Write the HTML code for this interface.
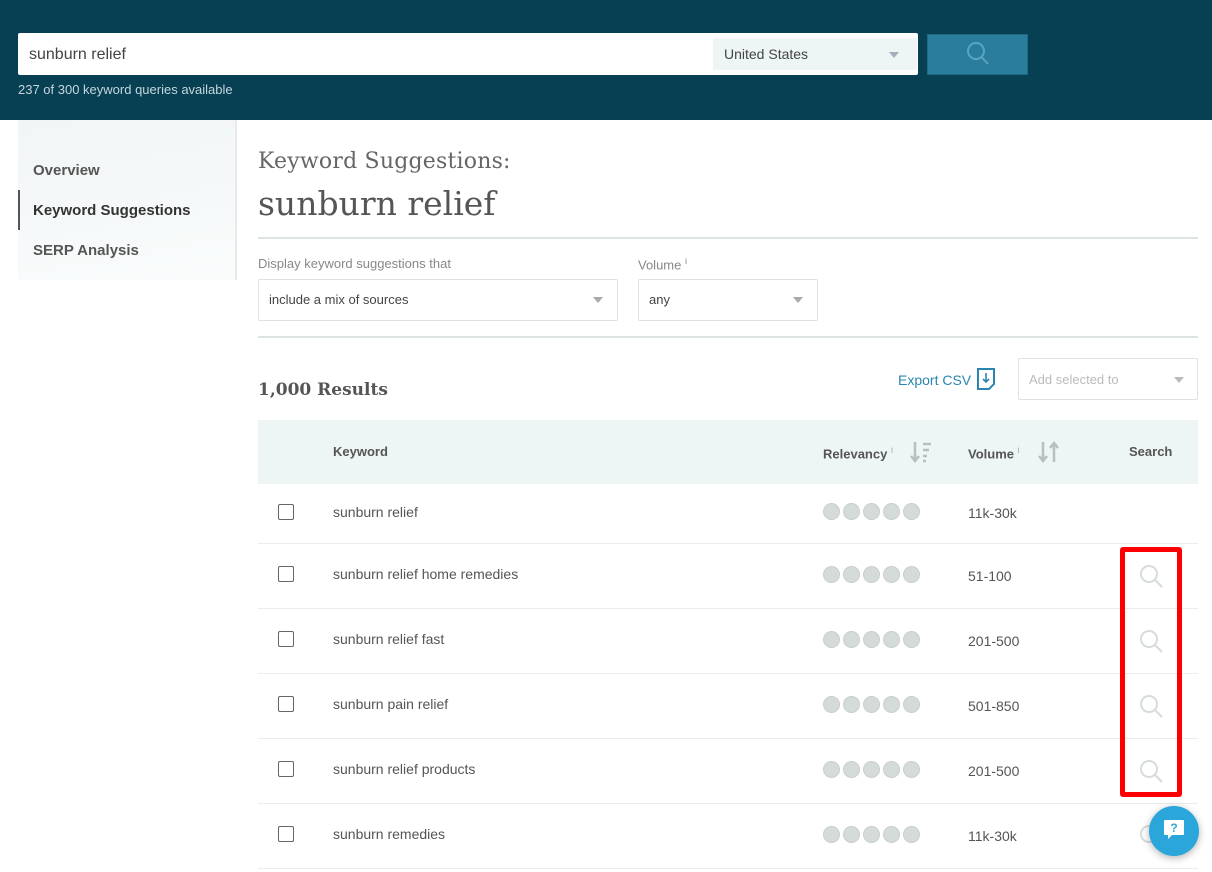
<!DOCTYPE html>
<html><head><meta charset="utf-8"><style>
*{box-sizing:border-box;margin:0;padding:0}
body{width:1212px;height:872px;overflow:hidden;background:#fff;font-family:"Liberation Sans",sans-serif;color:#555;position:relative}
.hdr{position:absolute;left:0;top:0;width:1212px;height:120px;background:#073f53}
.abs{position:absolute}
.dots span{display:inline-block;width:17px;height:17px;border-radius:50%;background:#d5dbd9;border:1px solid #c8cfcd;margin-right:3px;vertical-align:top}
.row{position:absolute;left:258px;width:940px;height:65px;border-bottom:1px solid #e8eeee}
.cb{position:absolute;left:20px;width:16px;height:16px;border:1.5px solid #666;border-radius:2px;background:#fff}
.kw{position:absolute;left:75px;font-size:14px;color:#555}
.vol{position:absolute;left:710px;font-size:14px;color:#555}
.dd{position:absolute;border:1px solid #dce2e2;border-radius:2px;background:#fff;font-size:14px;color:#444}
.tri{position:absolute;width:0;height:0;border-left:5px solid transparent;border-right:5px solid transparent;border-top:6px solid #aaa}
</style></head><body>
<div class="hdr"></div>
<div class="abs" style="left:18px;top:33px;width:900px;height:42px;background:#fff;border-radius:2px"></div>
<div class="abs" style="left:29px;top:46px;font-size:16px;color:#444">sunburn relief</div>
<div class="abs" style="left:713px;top:38px;width:204px;height:32px;background:#eef5f5"></div>
<div class="abs" style="left:724px;top:46px;font-size:14px;color:#444">United States</div>
<div class="tri" style="left:889px;top:52px;border-top-color:#aab"></div>
<div class="abs" style="left:927px;top:34px;width:101px;height:41px;background:#2a7d9c;border:1px solid #216a86"></div>
<svg class="abs" style="left:964px;top:40px" width="28" height="28" viewBox="0 0 28 28"><circle cx="12" cy="11" r="8" fill="none" stroke="#5aa5c2" stroke-width="2"/><line x1="17.5" y1="17" x2="24" y2="24" stroke="#5aa5c2" stroke-width="2"/></svg>
<div class="abs" style="left:18px;top:82px;font-size:13px;color:#c5d6dc">237 of 300 keyword queries available</div>

<div class="abs" style="left:18px;top:120px;width:219px;height:160px;background:linear-gradient(170deg,#f0f5f6,#fafcfc);border-right:2px solid #e6eaea"></div>
<div class="abs" style="left:33px;top:162px;font-size:15px;font-weight:bold;color:#555">Overview</div>
<div class="abs" style="left:18px;top:190px;width:2px;height:40px;background:#555"></div>
<div class="abs" style="left:33px;top:202px;font-size:15px;font-weight:bold;color:#333">Keyword Suggestions</div>
<div class="abs" style="left:33px;top:242px;font-size:15px;font-weight:bold;color:#555">SERP Analysis</div>

<div class="abs" style="left:258px;top:149px;font-family:'DejaVu Serif',serif;font-size:22px;color:#666;letter-spacing:0.2px">Keyword Suggestions:</div>
<div class="abs" style="left:258px;top:184px;font-family:'DejaVu Serif',serif;font-size:33px;color:#555">sunburn relief</div>
<div class="abs" style="left:258px;top:237px;width:940px;height:2px;background:#dde3e3"></div>
<div class="abs" style="left:258px;top:256px;font-size:13px;color:#888">Display keyword suggestions that</div>
<div class="abs" style="left:638px;top:256px;font-size:13px;color:#888">Volume <sup style="font-size:9px">i</sup></div>
<div class="dd" style="left:258px;top:279px;width:360px;height:42px"><span style="position:absolute;left:10px;top:12px;font-size:13px">include a mix of sources</span></div>
<div class="tri" style="left:593px;top:297px"></div>
<div class="dd" style="left:638px;top:279px;width:180px;height:42px"><span style="position:absolute;left:10px;top:12px;font-size:13px">any</span></div>
<div class="tri" style="left:793px;top:297px"></div>
<div class="abs" style="left:258px;top:336px;width:940px;height:2px;background:#dde3e3"></div>

<div class="abs" style="left:258px;top:380px;font-family:'DejaVu Serif',serif;font-weight:bold;font-size:17px;color:#555">1,000 Results</div>
<div class="abs" style="left:898px;top:372px;font-size:14px;color:#2a86b0">Export CSV</div>
<svg class="abs" style="left:976px;top:367px" width="20" height="24" viewBox="0 0 20 24"><path d="M2 2H18V17L13 22H2Z" fill="none" stroke="#2a86b0" stroke-width="2"/><path d="M10 6V15M7 12L10 15L13 12" fill="none" stroke="#2a86b0" stroke-width="1.6"/></svg>
<div class="dd" style="left:1018px;top:358px;width:180px;height:42px"><span style="position:absolute;left:10px;top:13px;font-size:13px;color:#bbb">Add selected to</span></div>
<div class="tri" style="left:1174px;top:377px;border-top-color:#bbb"></div>

<div class="abs" style="left:258px;top:420px;width:940px;height:64px;background:#eef6f5"></div>
<div class="abs" style="left:333px;top:444px;font-size:13px;font-weight:bold;color:#555">Keyword</div>
<div class="abs" style="left:823px;top:445px;font-size:13px;font-weight:bold;color:#555">Relevancy <sup style="font-size:9px;color:#aaa;font-weight:normal">i</sup></div>
<svg class="abs" style="left:908px;top:440px" width="26" height="24" viewBox="0 0 26 24"><path d="M7 2V20M3 16L7 21L11 16" fill="none" stroke="#b8c0be" stroke-width="2.5"/><path d="M15 4H23M15 10H21M15 16H19M15 21H18" stroke="#b8c0be" stroke-width="2.5"/></svg>
<div class="abs" style="left:968px;top:445px;font-size:13px;font-weight:bold;color:#555">Volume <sup style="font-size:9px;color:#aaa;font-weight:normal">i</sup></div>
<svg class="abs" style="left:1036px;top:440px" width="26" height="24" viewBox="0 0 26 24"><path d="M7 2V20M3 16L7 21L11 16" fill="none" stroke="#b8c0be" stroke-width="2.5"/><path d="M18 22V4M14 8L18 3L22 8" fill="none" stroke="#b8c0be" stroke-width="2.5"/></svg>
<div class="abs" style="left:1129px;top:444px;font-size:13px;font-weight:bold;color:#555">Search</div>

<div class="row" style="top:479px"><div class="cb" style="top:25px"></div><div class="kw" style="top:25px">sunburn relief</div><div class="dots abs" style="left:565px;top:24px"><span></span><span></span><span></span><span></span><span></span></div><div class="vol" style="top:26px">11k-30k</div></div>
<div class="row" style="top:544px"><div class="cb" style="top:22px"></div><div class="kw" style="top:22px">sunburn relief home remedies</div><div class="dots abs" style="left:565px;top:22px"><span></span><span></span><span></span><span></span><span></span></div><div class="vol" style="top:24px">51-100</div></div>
<div class="row" style="top:609px"><div class="cb" style="top:22px"></div><div class="kw" style="top:22px">sunburn relief fast</div><div class="dots abs" style="left:565px;top:22px"><span></span><span></span><span></span><span></span><span></span></div><div class="vol" style="top:24px">201-500</div></div>
<div class="row" style="top:674px"><div class="cb" style="top:22px"></div><div class="kw" style="top:22px">sunburn pain relief</div><div class="dots abs" style="left:565px;top:22px"><span></span><span></span><span></span><span></span><span></span></div><div class="vol" style="top:24px">501-850</div></div>
<div class="row" style="top:739px"><div class="cb" style="top:22px"></div><div class="kw" style="top:22px">sunburn relief products</div><div class="dots abs" style="left:565px;top:22px"><span></span><span></span><span></span><span></span><span></span></div><div class="vol" style="top:24px">201-500</div></div>
<div class="row" style="top:804px"><div class="cb" style="top:22px"></div><div class="kw" style="top:22px">sunburn remedies</div><div class="dots abs" style="left:565px;top:22px"><span></span><span></span><span></span><span></span><span></span></div><div class="vol" style="top:24px">11k-30k</div></div>

<svg class="abs" style="left:1138px;top:563px" width="28" height="220" viewBox="0 0 28 220">
<g fill="none" stroke="#d5dcda" stroke-width="2">
<circle cx="11" cy="11" r="8"/><line x1="17" y1="17" x2="24" y2="24"/>
<circle cx="11" cy="76" r="8"/><line x1="17" y1="82" x2="24" y2="89"/>
<circle cx="11" cy="141" r="8"/><line x1="17" y1="147" x2="24" y2="154"/>
<circle cx="11" cy="206" r="8"/><line x1="17" y1="212" x2="24" y2="219"/>
</g></svg>
<svg class="abs" style="left:1138px;top:823px" width="20" height="20"><circle cx="11" cy="11" r="8" fill="none" stroke="#d5dcda" stroke-width="2"/></svg>
<div class="abs" style="left:1120px;top:547px;width:62px;height:250px;border:5px solid #f00;border-radius:3px"></div>

<div class="abs" style="left:1149px;top:806px;width:50px;height:50px;border-radius:50%;background:#2aa6db;box-shadow:0 2px 8px rgba(0,0,0,.3)"></div>
<svg class="abs" style="left:1162px;top:818px" width="24" height="24" viewBox="0 0 24 24"><path d="M3 2H21Q22 2 22 3V16Q22 17 21 17H10L6 21V17H3Q2 17 2 16V3Q2 2 3 2Z" fill="#fff"/><text x="12" y="14" font-size="12" font-weight="bold" text-anchor="middle" fill="#2aa6db" font-family="Liberation Sans">?</text></svg>
</body></html>
